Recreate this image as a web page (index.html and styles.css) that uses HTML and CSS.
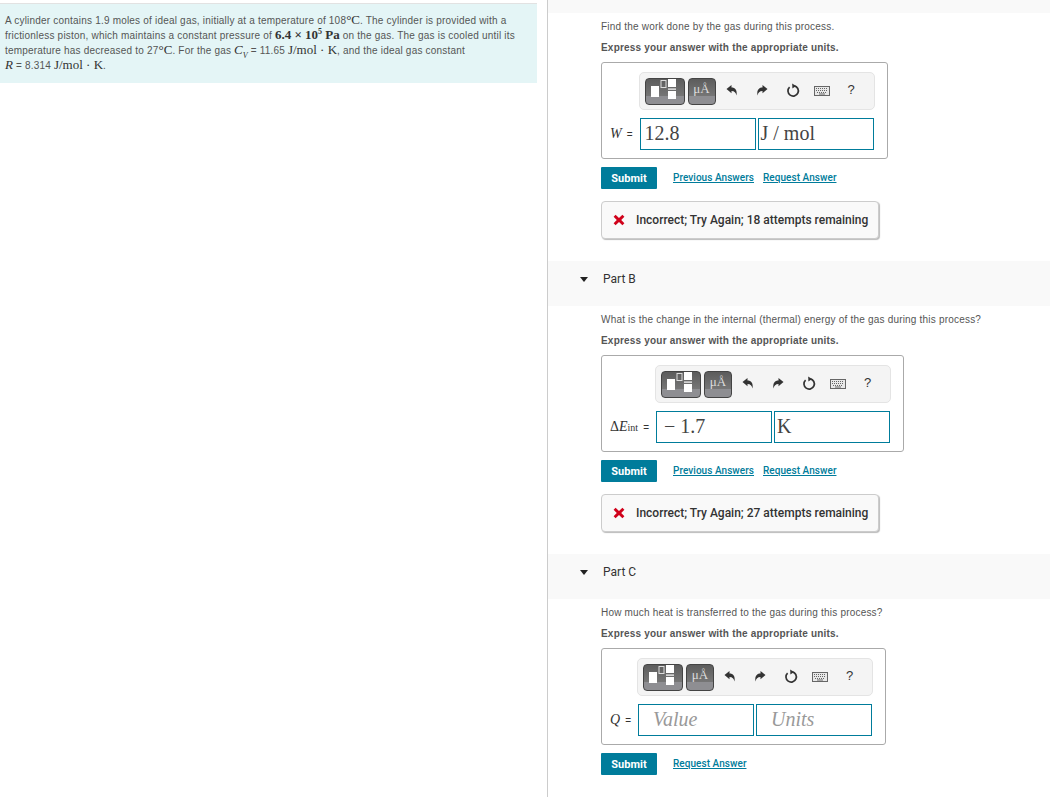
FILE: index.html
```html
<!DOCTYPE html>
<html lang="en">
<head>
  <meta charset="UTF-8">
  <title>Problem</title>
  <link rel="stylesheet" href="styles.css">
</head>
<body>
  <svg class="defs" width="0" height="0">
    <symbol id="undo" viewBox="0 0 12 12"><path d="M0.5 4.5 L5.5 0.5 V3 C9 3 11.5 5.5 10.5 11 C9.8 8 8.5 6.5 5.5 6.5 V8.8 Z"/></symbol>
    <symbol id="redo" viewBox="0 0 12 12"><path d="M11.5 4.5 L6.5 0.5 V3 C3 3 0.5 5.5 1.5 11 C2.2 8 3.5 6.5 6.5 6.5 V8.8 Z"/></symbol>
    <symbol id="reset" viewBox="0 0 14 14"><path d="M8.2 2.3 A5.2 5.2 0 1 1 3.6 3.6" fill="none" stroke="#333" stroke-width="1.7"/><path d="M6.2 0 L10 2.6 L6.4 5 Z"/></symbol>
    <symbol id="keys" viewBox="0 0 16 10"><rect x="0.5" y="0.5" width="15" height="9" fill="#e8e8e8" stroke="#666"/><path d="M2 2.5 H14 M2 4.5 H14 M3 6.5 H13" stroke="#666" stroke-dasharray="1 1" fill="none"/><path d="M5 8 H11" stroke="#666"/></symbol>
    <symbol id="templates" viewBox="0 0 40 27"><rect x="6" y="8" width="8" height="11" fill="#fff"/><rect x="16" y="2.5" width="5" height="7" fill="none" stroke="#ddd"/><rect x="23" y="1" width="8" height="8" fill="#fff"/><rect x="23" y="10.5" width="8" height="1.2" fill="#fff"/><rect x="23" y="13" width="8" height="8" fill="#fff"/></symbol>
    <symbol id="cross" viewBox="0 0 12 12"><path d="M2.6 0.8 L6 4 L9.4 0.8 L11.4 2.8 L8.2 6 L11.4 9.2 L9.4 11.2 L6 8 L2.6 11.2 L0.6 9.2 L3.8 6 L0.6 2.8 Z"/></symbol>
  </svg>

  <div class="page">
    <div class="left-col">
      <div class="problem">
        A cylinder contains 1.9 moles of ideal gas, initially at a temperature of 108<span class="m">°C</span>. The cylinder is provided with a<br>
        frictionless piston, which maintains a constant pressure of <span class="m b">6.4 × 10<sup>5</sup> Pa</span> on the gas. The gas is cooled until its<br>
        temperature has decreased to 27<span class="m">°C</span>. For the gas <span class="m"><i>C<sub>V</sub></i></span> = 11.65 <span class="m">J/mol · K</span>, and the ideal gas constant<br>
        <span class="m"><i>R</i></span> = 8.314 <span class="m">J/mol · K</span>.
      </div>
    </div>

    <div class="right-col">
      <div class="part-band"></div>
      <div class="part-body">
        <p class="question">Find the work done by the gas during this process.</p>
        <p class="express">Express your answer with the appropriate units.</p>
        <div class="answer-box">
          <div class="toolbar">
            <span class="tool-btn wide"><svg width="40" height="27"><use href="#templates"/></svg></span>
            <span class="tool-btn">μÅ</span>
            <svg class="ico ico-undo"><use href="#undo"/></svg>
            <svg class="ico ico-redo"><use href="#redo"/></svg>
            <svg class="ico ico-reset"><use href="#reset"/></svg>
            <svg class="ico ico-keys"><use href="#keys"/></svg>
            <span class="help">?</span>
          </div>
          <div class="var"><i>W</i><span class="eq">=</span></div>
          <div class="inputs">
            <div class="field">12.8</div>
            <div class="field units">J / mol</div>
          </div>
        </div>
        <div class="actions">
          <span class="submit">Submit</span>
          <a href="#">Previous Answers</a>
          <a href="#">Request Answer</a>
        </div>
        <div class="feedback">
          <svg class="cross"><use href="#cross"/></svg>
          Incorrect; Try Again; 18 attempts remaining
        </div>
      </div>

      <div class="part-head"><span class="arrow"></span>Part B</div>
      <div class="part-body">
        <p class="question">What is the change in the internal (thermal) energy of the gas during this process?</p>
        <p class="express">Express your answer with the appropriate units.</p>
        <div class="answer-box">
          <div class="toolbar">
            <span class="tool-btn wide"><svg width="40" height="27"><use href="#templates"/></svg></span>
            <span class="tool-btn">μÅ</span>
            <svg class="ico ico-undo"><use href="#undo"/></svg>
            <svg class="ico ico-redo"><use href="#redo"/></svg>
            <svg class="ico ico-reset"><use href="#reset"/></svg>
            <svg class="ico ico-keys"><use href="#keys"/></svg>
            <span class="help">?</span>
          </div>
          <div class="var">Δ<i>E</i><sub>int</sub><span class="eq">=</span></div>
          <div class="inputs">
            <div class="field minus">− 1.7</div>
            <div class="field units">K</div>
          </div>
        </div>
        <div class="actions">
          <span class="submit">Submit</span>
          <a href="#">Previous Answers</a>
          <a href="#">Request Answer</a>
        </div>
        <div class="feedback">
          <svg class="cross"><use href="#cross"/></svg>
          Incorrect; Try Again; 27 attempts remaining
        </div>
      </div>

      <div class="part-head"><span class="arrow"></span>Part C</div>
      <div class="part-body">
        <p class="question">How much heat is transferred to the gas during this process?</p>
        <p class="express">Express your answer with the appropriate units.</p>
        <div class="answer-box">
          <div class="toolbar">
            <span class="tool-btn wide"><svg width="40" height="27"><use href="#templates"/></svg></span>
            <span class="tool-btn">μÅ</span>
            <svg class="ico ico-undo"><use href="#undo"/></svg>
            <svg class="ico ico-redo"><use href="#redo"/></svg>
            <svg class="ico ico-reset"><use href="#reset"/></svg>
            <svg class="ico ico-keys"><use href="#keys"/></svg>
            <span class="help">?</span>
          </div>
          <div class="var"><i>Q</i><span class="eq">=</span></div>
          <div class="inputs">
            <div class="field empty">Value</div>
            <div class="field empty">Units</div>
          </div>
        </div>
        <div class="actions">
          <span class="submit">Submit</span>
          <a href="#">Request Answer</a>
        </div>
      </div>
    </div>
  </div>
</body>
</html>
```

FILE: styles.css
```css
* {
  box-sizing: border-box;
  margin: 0;
  padding: 0;
}

html, body {
  height: 797px;
  overflow: hidden;
}

body {
  background: #fff;
  color: #555;
  font-family: "Liberation Sans", Arial, sans-serif;
  font-size: 10px;
  letter-spacing: 0.2px;
}

.defs {
  position: absolute;
}

.page {
  display: flex;
  height: 797px;
}

.left-col {
  width: 548px;
  padding: 3px 10px 0 0;
  border-right: 1px solid #ccc;
  flex-shrink: 0;
}

.problem {
  height: 80px;
  padding: 9px 5px 0;
  background: #e4f5f6;
  border-top: 1px solid #e2e2e2;
  line-height: 15px;
  white-space: nowrap;
}

.m {
  font-family: "Liberation Serif", serif;
  font-size: 13px;
  letter-spacing: 0;
  line-height: 0;
  color: #333;
}

.b {
  font-weight: bold;
}

.m sup {
  font-size: 8px;
  line-height: 0;
}

.m sub {
  font-size: 8px;
  line-height: 0;
}

.right-col {
  flex: 1;
  min-width: 0;
}

.part-band {
  height: 13px;
  background: #f9f9f9;
}

.part-head {
  display: flex;
  align-items: center;
  height: 45px;
  padding: 0 0 9px 32px;
  background: #f9f9f9;
  font-family: "Roboto", "Liberation Sans", sans-serif;
  font-size: 12px;
  letter-spacing: 0;
  color: #333;
}

.arrow {
  width: 0;
  height: 0;
  margin-right: 15px;
  border-left: 4px solid transparent;
  border-right: 4px solid transparent;
  border-top: 5px solid #222;
}

.part-body {
  padding: 7px 0 22px 53px;
}

.question {
  height: 21px;
  line-height: 13px;
}

.express {
  height: 21px;
  line-height: 13px;
  font-weight: bold;
}

.answer-box {
  display: inline-grid;
  grid-template-columns: auto auto;
  align-items: center;
  padding: 9px 12px 8px 8px;
  background: #fff;
  border: 1px solid #aaa;
  border-radius: 3px;
  vertical-align: top;
}

.toolbar {
  grid-column: 2;
  display: flex;
  align-items: center;
  position: relative;
  width: 236px;
  height: 38px;
  margin: 0 0 8px -1px;
  padding-left: 5px;
  background: #f4f4f4;
  border: 1px solid #e4e4e4;
  border-radius: 5px;
}

.tool-btn {
  display: flex;
  justify-content: center;
  width: 28px;
  height: 27px;
  margin-right: 3px;
  background: linear-gradient(#5c5c5c, #767676 68%, #8e8e92 68%);
  border: 1px solid #444;
  border-radius: 4px;
  color: #ddd;
  font-family: "Liberation Serif", serif;
  font-size: 13px;
  letter-spacing: 0;
  line-height: 20px;
}

.tool-btn.wide {
  width: 40px;
}

.tool-btn.wide svg {
  flex-shrink: 0;
  margin: -1px;
}

.ico {
  position: absolute;
  fill: #333;
}

.ico-undo { left: 86px; top: 11px; width: 12px; height: 13px; }
.ico-redo { left: 116px; top: 11px; width: 12px; height: 13px; }
.ico-reset { left: 146px; top: 10px; width: 14px; height: 15px; }
.ico-keys { left: 174px; top: 13px; width: 16px; height: 10px; }

.help {
  position: absolute;
  left: 208px;
  top: 9px;
  font-family: "Liberation Sans", sans-serif;
  font-size: 13px;
  color: #333;
}

.var {
  display: flex;
  align-items: baseline;
  padding-right: 7px;
  font-family: "Liberation Serif", serif;
  font-size: 14px;
  letter-spacing: 0;
  white-space: pre;
  color: #333;
}

.var sub {
  font-size: 10px;
}

.eq {
  margin-left: 5px;
  font-family: "Liberation Sans", sans-serif;
  font-size: 10px;
}

.inputs {
  display: flex;
  gap: 2px;
}

.field {
  width: 116px;
  height: 32px;
  padding-left: 4px;
  border: 1px solid #007c9b;
  font-family: "Liberation Serif", serif;
  font-size: 20px;
  letter-spacing: 0;
  line-height: 29px;
  color: #444;
}

.field.units {
  padding-left: 2px;
}

.field.minus {
  padding-left: 7px;
}

.field.empty {
  padding-left: 14px;
  font-style: italic;
  color: #999;
}

.actions {
  display: flex;
  align-items: center;
  gap: 9px;
  margin-top: 8px;
}

.submit {
  width: 56px;
  height: 22px;
  margin-right: 7px;
  background: #007c9b;
  border-radius: 1px;
  color: #fff;
  font-family: "Roboto", "Liberation Sans", sans-serif;
  font-size: 11px;
  font-weight: 700;
  letter-spacing: 0;
  line-height: 23px;
  text-align: center;
}

.actions a {
  margin-top: -2px;
  color: #007c9b;
  font-family: "Roboto", "Liberation Sans", sans-serif;
  font-size: 10px;
  font-weight: 500;
  letter-spacing: 0.05px;
}

.feedback {
  display: flex;
  align-items: center;
  width: 278px;
  height: 38px;
  margin-top: 12px;
  padding: 0 0 1px 11px;
  background: #f9f9f9;
  border: 1px solid #ccc;
  border-radius: 4px;
  box-shadow: 1px 1px 1px #bbb;
  color: #333;
  font-family: "Roboto", "Liberation Sans", sans-serif;
  font-size: 12px;
  font-weight: 500;
  letter-spacing: 0;
}

.cross {
  width: 12px;
  height: 12px;
  margin-right: 11px;
  fill: #d0021b;
}
```
